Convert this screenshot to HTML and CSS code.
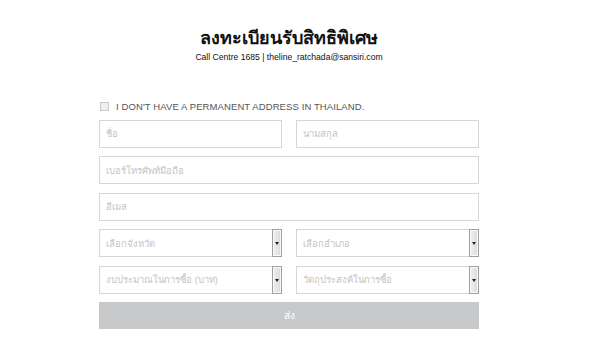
FILE: index.html
```html
<!DOCTYPE html>
<html lang="th">
<head>
<meta charset="utf-8">
<title>ลงทะเบียนรับสิทธิพิเศษ</title>
<link rel="stylesheet" href="styles.css">
</head>
<body>
<div class="page">
  <header class="head">
    <h1 class="title">ลงทะเบียนรับสิทธิพิเศษ</h1>
    <p class="sub">Call Centre 1685 | theline_ratchada@sansiri.com</p>
  </header>
  <form class="form">
    <label class="check"><span class="box"></span><span class="check-text">I DON'T HAVE A PERMANENT ADDRESS IN THAILAND.</span></label>
    <div class="row two">
      <div class="field">ชื่อ</div>
      <div class="field">นามสกุล</div>
    </div>
    <div class="row"><div class="field">เบอร์โทรศัพท์มือถือ</div></div>
    <div class="row"><div class="field">อีเมล</div></div>
    <div class="row two">
      <div class="field select"><span class="ph">เลือกจังหวัด</span><span class="arrow"></span></div>
      <div class="field select"><span class="ph">เลือกอำเภอ</span><span class="arrow"></span></div>
    </div>
    <div class="row two">
      <div class="field select"><span class="ph">งบประมาณในการซื้อ (บาท)</span><span class="arrow"></span></div>
      <div class="field select"><span class="ph">วัตถุประสงค์ในการซื้อ</span><span class="arrow"></span></div>
    </div>
    <div class="row"><div class="btn">ส่ง</div></div>
  </form>
</div>
</body>
</html>
```
FILE: styles.css
```css
html, body { margin: 0; padding: 0; background: #fff; }
body { font-family: "Liberation Sans", Arial, "Noto Sans", sans-serif; color: #222; }
.page { width: 380px; margin-left: 99px; padding-top: 28px; }
.head { text-align: center; }
.title { margin: 0; font-size: 18px; line-height: 20px; font-weight: bold; color: #111; }
.sub { margin: 4px 0 0; font-size: 8.6px; line-height: 11px; color: #111; }
.form { margin-top: 38px; display: flex; flex-direction: column; gap: 8.4px; }
.check { display: flex; align-items: center; gap: 7px; height: 10px; margin-bottom: 0.6px; padding-left: 1px; }
.box { width: 7px; height: 7px; border: 1px solid #c9c9c9; background: #f0f0f0; }
.check-text { font-size: 9.5px; color: #555; letter-spacing: 0.1px; }
.row { display: flex; }
.row.two { gap: 14px; }
.row.two .field { flex: 1; }
.field { flex: 1; box-sizing: border-box; height: 28px; border: 1px solid #d6d6d6; display: flex; align-items: center; padding-left: 6px; font-size: 9.5px; color: #c4c4c4; }
.select { padding-right: 0; justify-content: space-between; }
.arrow { box-sizing: border-box; width: 10px; height: 28px; margin-right: -1px; border: 1px solid #a0a0a0; background: linear-gradient(to right, #f0f0f0, #dadada); position: relative; box-shadow: inset 0 0 0 1px #f9f9f9; }
.arrow::after { content: ""; position: absolute; left: 2px; top: 12px; border-left: 2px solid transparent; border-right: 2px solid transparent; border-top: 3px solid #222; }
.btn { flex: 1; height: 27px; background: #c8c9cb; color: #fff; font-size: 10px; display: flex; align-items: center; justify-content: center; }
```
